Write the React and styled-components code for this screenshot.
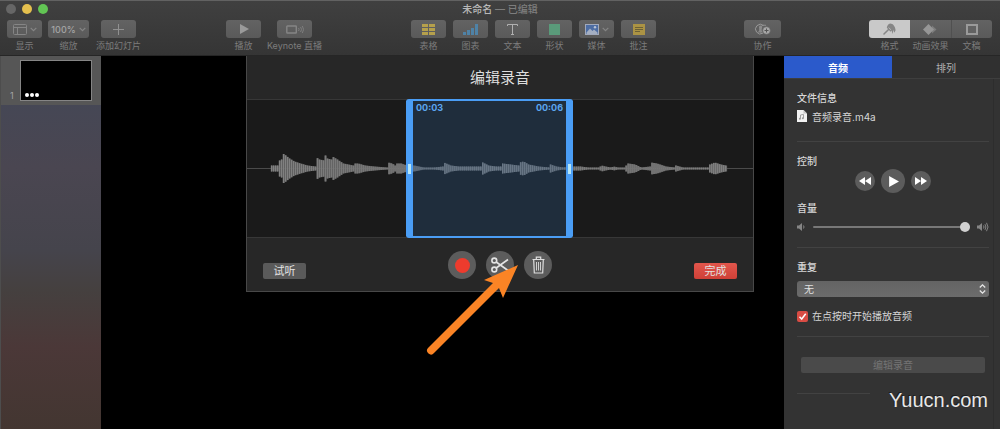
import { useState } from 'react';
import { styled, createGlobalStyle } from 'styled-components';

// [x, half height] of the recording's envelope
const ENVELOPE = [
  [0, 0], [24, 0], [25, 3], [32, 3], [33, 8], [35, 9], [36, 15], [38, 14], [43, 10], [48, 7],
  [54, 5], [61, 3], [69, 2], [70, 11], [73, 9], [78, 8], [79, 13], [81, 10], [85, 9], [86, 12],
  [91, 9], [97, 5], [107, 3], [108, 5], [112, 5], [119, 3], [128, 2], [141, 1], [142, 6],
  [146, 5], [149, 3], [150, 5], [155, 5], [161, 3], [168, 3], [178, 1], [188, 1], [197, 2],
  [198, 6], [205, 3], [213, 2], [236, 2], [237, 6], [243, 3], [250, 2], [256, 2], [257, 5],
  [265, 4], [273, 3], [274, 6], [278, 7], [283, 4], [293, 2], [304, 1], [305, 4], [311, 2],
  [318, 1], [323, 2], [335, 2], [343, 1], [354, 1], [356, 3], [360, 2], [366, 1], [368, 2],
  [373, 1], [380, 1], [381, 3], [383, 5], [390, 4], [396, 1], [405, 2], [406, 6], [412, 5],
  [421, 2], [430, 1], [431, 3], [438, 1], [463, 1], [465, 4], [470, 6], [476, 4], [481, 3],
  [482, 0], [508, 0],
];

const heightAt = (x) => {
  const i = ENVELOPE.findIndex(([px]) => px > x);
  if (i < 1) return 0;
  const [x0, h0] = ENVELOPE[i - 1];
  const [x1, h1] = ENVELOPE[i];
  return h0 + ((h1 - h0) * (x - x0)) / (x1 - x0);
};

const BARS = Array.from({ length: 253 }, (_, i) => ({ x: i * 2, h: heightAt(i * 2 + 1) }))
  .filter(({ h }) => h > 0);

const Chevron = () => (
  <svg width="7" height="5" viewBox="0 0 7 5" fill="none" stroke="#858585" strokeWidth="1.2">
    <path d="M.7 .8 3.5 3.7 6.3 .8" />
  </svg>
);

const ViewIcon = () => (
  <svg width="14" height="11" viewBox="0 0 14 11" fill="none" stroke="#858585">
    <rect x=".5" y=".5" width="13" height="10" rx="1" />
    <path d="M.5 3.5h13M4.5 3.5v7" />
  </svg>
);

const PlusIcon = () => (
  <svg width="11" height="11" viewBox="0 0 11 11" stroke="#909090">
    <path d="M5.5 0v11M0 5.5h11" />
  </svg>
);

const PlayIcon = ({ size = 10, color = '#9a9a9a' }) => (
  <svg width={size} height={size} viewBox="0 0 10 10" fill={color}>
    <path d="M1 0 10 5 1 10z" />
  </svg>
);

const LiveIcon = () => (
  <svg width="18" height="9" viewBox="0 0 18 9" fill="none" stroke="#858585">
    <rect x=".8" y="1" width="9.5" height="7" rx=".5" strokeWidth="1.4" />
    <path d="M12.5 3q1.2 1.5 0 3M14.5 2q2.2 2.5 0 5M16.3 1q2.6 3.5 0 7" strokeWidth=".8" />
  </svg>
);

const TableIcon = () => (
  <svg width="13" height="11" viewBox="0 0 13 11" fill="#b5a04c">
    <path d="M0 0h6v3H0zM7 0h6v3H7zM0 4h6v3H0zM7 4h6v3H7zM0 8h6v3H0zM7 8h6v3H7z" />
  </svg>
);

const ChartIcon = () => (
  <svg width="15" height="11" viewBox="0 0 15 11" fill="#4f82a6">
    <path d="M0 8h3v3H0zM4 6h3v5H4zM8 4h3v7H8zM12 0h3v11h-3z" />
  </svg>
);

const TextIcon = () => (
  <svg width="11" height="11" viewBox="0 0 11 11" stroke="#b0b0b0" fill="none">
    <path d="M.5 2V.5h10V2M5.5 .5V10.500M4 10.500h3" />
  </svg>
);

const ShapeIcon = () => (
  <svg width="11" height="11" viewBox="0 0 11 11"><rect width="11" height="11" fill="#5a9a7a" /></svg>
);

const MediaIcon = () => (
  <svg width="14" height="11" viewBox="0 0 14 11">
    <rect x=".5" y=".5" width="13" height="10" fill="#4d6da3" stroke="#a1a9bb" />
    <path d="M1.500 8.500 5 4.500 7.500 7 9 5.500 12.500 8.500V10h-11z" fill="#a4afc3" />
    <circle cx="10" cy="3.300" r="1.200" fill="#bac4d4" />
  </svg>
);

const CommentIcon = () => (
  <svg width="12" height="11" viewBox="0 0 12 11">
    <rect width="12" height="11" fill="#ab9344" />
    <path d="M2 3.500h8M2 5.500h8M2 7.500h5" stroke="#6b6036" />
  </svg>
);

const CollabIcon = () => (
  <svg width="17" height="12" viewBox="0 0 17 12" fill="none" stroke="#999">
    <path d="M9 10.100A4.800 4.800 0 1 1 9.500 2.500" />
    <path d="M6.500 9.500A4.800 4.800 0 0 1 12 2.300" strokeWidth=".8" />
    <path d="M6.500 2.500c1.800 0 2.200 2 1.200 3.500v1.300l1 2.200H3.600l1.900-2.200V6C4.500 4.500 4.800 2.500 6.500 2.500z" fill="#8a8a8a" stroke="none" />
    <circle cx="12.500" cy="7.500" r="3.800" fill="#a6a6a6" stroke="#666" strokeWidth=".6" />
    <path d="M12.500 5.500v4M10.500 7.500h4" stroke="#555" />
  </svg>
);

const FormatIcon = () => (
  <svg width="13" height="12" viewBox="0 0 13 12" fill="#868686">
    <path d="M3.800 4.800C4.200 2.600 5.200 .5 7.200 .4c2.800 0 5 2.800 5.400 6.800l-1.300 2.600-.9-3-.7 4.200-1.200-3.600-1.100 1.400-1.500-1.900z" />
    <path d="M5.800 6.300 1 11" stroke="#868686" strokeWidth="1.500" strokeLinecap="round" />
    <path d="M5.600 4.600 8 6.800" stroke="#c9c9c9" strokeWidth=".7" />
  </svg>
);

const AnimateIcon = () => (
  <svg width="15" height="11" viewBox="0 0 15 11">
    <path d="M9 1.500 13.500 5.500 9 9.500z" fill="#7d7d7d" />
    <path d="M0 5.500 5.500 0 11 5.500 5.500 11z" fill="#969696" />
  </svg>
);

const DocumentIcon = () => (
  <svg width="12" height="11" viewBox="0 0 12 11">
    <rect x="1" y="1" width="10" height="9" fill="#626262" stroke="#9a9a9a" strokeWidth="2" />
  </svg>
);

const ScissorsIcon = () => (
  <svg width="18" height="16" viewBox="0 0 18 16" fill="none" stroke="#e4e4e4" strokeWidth="1.600">
    <circle cx="3.300" cy="3.500" r="2.400" />
    <circle cx="3.300" cy="12.500" r="2.400" />
    <path d="M5.200 5 17 13.500M5.200 11 17 2.500" />
  </svg>
);

const TrashIcon = () => (
  <svg width="13" height="18" viewBox="0 0 13 18" fill="none" stroke="#dedede" strokeWidth="1.200">
    <path d="M.5 3.500h12M4.300 3.300V1.200h4.400v2.100M1.700 3.800 2.300 17h8.400l.6-13.200" />
    <path d="M4.500 6v8.500M6.500 6v8.500M8.500 6v8.500" strokeWidth=".9" />
  </svg>
);

const SkipIcon = ({ back }) => (
  <svg width="12" height="8" viewBox="0 0 12 8" fill="#fff">
    <path d={back ? 'M6 0v8L0 4zM12 0v8L6 4z' : 'M0 0v8l6-4zM6 0v8l6-4z'} />
  </svg>
);

const SpeakerIcon = ({ loud }) => (
  <svg width={loud ? 12 : 9} height="10" viewBox={loud ? '0 0 12 10' : '0 0 9 10'} fill="none" stroke="#858585">
    <path d="M0 3.500h2L5 1v8L2 6.500H0z" fill="#858585" stroke="none" />
    <path d="M6.500 3.500q1 1.500 0 3" />
    {loud && <path d="M8 2.200q1.800 2.800 0 5.600M9.500 .8q3 4.200 0 8.400" />}
  </svg>
);

const FileIcon = () => (
  <svg width="10" height="12" viewBox="0 0 10 12">
    <path d="M0 0h6.500L10 3.500V12H0z" fill="#f2f2f2" />
    <path d="M6.500 0v3.500H10z" fill="#c4c4c4" />
    <path d="M3.500 8.700V5l3-.6v3.700" fill="none" stroke="#9a9a9a" strokeWidth=".9" />
    <circle cx="2.900" cy="8.800" r="1" fill="#9a9a9a" />
    <circle cx="5.900" cy="8.200" r="1" fill="#9a9a9a" />
  </svg>
);

const INSERT_TOOLS = [
  { label: '表格', icon: <TableIcon /> },
  { label: '图表', icon: <ChartIcon /> },
  { label: '文本', icon: <TextIcon /> },
  { label: '形状', icon: <ShapeIcon /> },
  { label: '媒体', icon: <><MediaIcon /><Chevron /></> },
  { label: '批注', icon: <CommentIcon /> },
];

const PANELS = [
  { label: '格式', icon: <FormatIcon /> },
  { label: '动画效果', icon: <AnimateIcon /> },
  { label: '文稿', icon: <DocumentIcon /> },
];

const Tool = ({ id, label, width = 35, children }) => (
  <ToolItem $width={width}>
    <ToolButton id={id} aria-label={label}>{children}</ToolButton>
    <ToolLabel htmlFor={id}>{label}</ToolLabel>
  </ToolItem>
);

const Waveform = () => (
  <WaveArea>
    <WaveSvg viewBox="0 0 508 31" preserveAspectRatio="none">
      <rect y="15" width="508" height="1" fill="#4b4b4b" />
      {BARS.map(({ x, h }) => (
        <g key={x}>
          <rect x={x} y={15.5 - h} width="2" height={h * 2} fill="#666" />
          <rect x={x} y={15.5 - h} width="1" height={h * 2} fill="#858585" />
        </g>
      ))}
    </WaveSvg>
    <Selection>
      <Handle />
      <Times><span>00:03</span><span>00:06</span></Times>
      <Handle />
    </Selection>
  </WaveArea>
);

const RecordingSheet = () => (
  <Sheet>
    <SheetTitle>编辑录音</SheetTitle>
    <Waveform />
    <SheetFooter>
      <PushButton>试听</PushButton>
      <RoundButtons>
        <RoundButton $size={28} aria-label="录音"><RecordDot /></RoundButton>
        <RoundButton $size={28} aria-label="裁剪"><ScissorsIcon /></RoundButton>
        <RoundButton $size={28} aria-label="删除"><TrashIcon /></RoundButton>
      </RoundButtons>
      <PushButton $primary>完成</PushButton>
    </SheetFooter>
    <Pointer viewBox="0 0 98 94">
      <path d="M93 1 78 34 74 24 9 89A3.500 3.500 0 0 1 3 84L68 19 59 16z" fill="#fb8425" />
    </Pointer>
  </Sheet>
);

const Inspector = () => {
  const [tab, setTab] = useState('音频');
  const [volume, setVolume] = useState(100);
  const [autoPlay, setAutoPlay] = useState(true);

  return (
    <InspectorPane>
      <Tabs>
        {['音频', '排列'].map((name) => (
          <Tab key={name} $active={tab === name} onClick={() => setTab(name)}>{name}</Tab>
        ))}
      </Tabs>
      <InspectorBody>
        <Section>
          <Heading>文件信息</Heading>
          <FileRow><FileIcon />音频录音.m4a</FileRow>
        </Section>
        <Section>
          <Heading>控制</Heading>
          <Playback>
            <RoundButton $size={20} aria-label="后退"><SkipIcon back /></RoundButton>
            <RoundButton $size={24} aria-label="播放"><PlayIcon size={11} color="#fff" /></RoundButton>
            <RoundButton $size={20} aria-label="前进"><SkipIcon /></RoundButton>
          </Playback>
          <Heading as="label" htmlFor="volume">音量</Heading>
          <VolumeRow>
            <SpeakerIcon />
            <Slider
              id="volume"
              type="range"
              value={volume}
              onChange={({ target }) => setVolume(target.value)}
            />
            <SpeakerIcon loud />
          </VolumeRow>
        </Section>
        <Section>
          <Heading as="label" htmlFor="repeat">重复</Heading>
          <SelectBox>
            <Select id="repeat" defaultValue="none">
              <option value="none">无</option>
            </Select>
            <SelectArrows viewBox="0 0 7 10" fill="none" stroke="#e6e6e6" strokeWidth="1.300">
              <path d="M.8 3.500 3.500 .9 6.200 3.500M.8 6.500 3.500 9.100 6.200 6.500" />
            </SelectArrows>
          </SelectBox>
          <CheckRow>
            <Checkbox
              type="checkbox"
              checked={autoPlay}
              onChange={({ target }) => setAutoPlay(target.checked)}
            />
            <CheckMark viewBox="0 0 11 11" fill="none" stroke="#fff" strokeWidth="1.500">
              {autoPlay && <path d="M2.500 5.800 4.700 8 8.700 2.800" />}
            </CheckMark>
            在点按时开始播放音频
          </CheckRow>
        </Section>
        <Section>
          <EditButton disabled>编辑录音</EditButton>
        </Section>
        <ShortRule />
      </InspectorBody>
    </InspectorPane>
  );
};

const App = () => {
  const [panel, setPanel] = useState('格式');

  return (
    <Window>
      <GlobalStyle />
      <Header>
        <TitleBar>
          <Lights>
            <Light $color="#666" />
            <Light $color="#e5c04e" />
            <Light $color="#62c554" />
          </Lights>
          <Title>未命名 <Edited>— 已编辑</Edited></Title>
        </TitleBar>
        <Toolbar>
          <Group $gap={6}>
            <Tool id="view" label="显示"><ViewIcon /><Chevron /></Tool>
            <Tool id="zoom" label="缩放" width={41}>100%<Chevron /></Tool>
          </Group>
          <AddGroup><Tool id="add" label="添加幻灯片"><PlusIcon /></Tool></AddGroup>
          <Spacer $grow={90} />
          <Group $gap={16}>
            <Tool id="play" label="播放"><PlayIcon /></Tool>
            <Tool id="live" label="Keynote 直播"><LiveIcon /></Tool>
          </Group>
          <Spacer $grow={99} />
          <Group $gap={7}>
            {INSERT_TOOLS.map(({ label, icon }) => (
              <Tool key={label} id={label} label={label}>{icon}</Tool>
            ))}
          </Group>
          <Spacer $grow={88} />
          <Tool id="collab" label="协作" width={37}><CollabIcon /></Tool>
          <Spacer $grow={88} />
          <Segments>
            {PANELS.map(({ label, icon }) => (
              <ToolItem key={label} $width={41}>
                <SegmentButton
                  id={label}
                  aria-label={label}
                  $active={panel === label}
                  onClick={() => setPanel(label)}
                >
                  {icon}
                </SegmentButton>
                <ToolLabel htmlFor={label}>{label}</ToolLabel>
              </ToolItem>
            ))}
          </Segments>
        </Toolbar>
      </Header>
      <Main>
        <Navigator>
          <SlideRow>
            <SlideNumber>1</SlideNumber>
            <Thumbnail><i /><i /><i /></Thumbnail>
          </SlideRow>
        </Navigator>
        <Canvas />
        <Inspector />
        <SheetLayer><RecordingSheet /></SheetLayer>
      </Main>
      <Watermark>Yuucn.com</Watermark>
    </Window>
  );
};

const GlobalStyle = createGlobalStyle`
  * {
    box-sizing: border-box;
  }

  body {
    background: #000;
    font-family: Inter, "Noto Sans CJK SC", sans-serif;
    font-size: 10px;
    margin: 0;
  }

  button, select, input {
    border: 0;
    color: inherit;
    font: inherit;
    margin: 0;
    padding: 0;
  }

  svg {
    display: block;
    flex: none;
  }
`;

const Window = styled.div`
  display: flex;
  flex-direction: column;
  min-height: 100vh;
  position: relative;
`;

const Header = styled.header`
  background: linear-gradient(#404040, #353535);
  border-bottom: 1px solid #262626;
  border-top: 1px solid #626262;
`;

const TitleBar = styled.div`
  align-items: center;
  display: grid;
  grid-template-columns: 1fr auto 1fr;
  height: 16px;
  padding: 0 6px;
`;

const Lights = styled.div`
  display: flex;
  gap: 6px;
`;

const Light = styled.span`
  background: ${({ $color }) => $color};
  border-radius: 50%;
  height: 10px;
  width: 10px;
`;

const Title = styled.h1`
  color: #b8b8b8;
  font-size: 10px;
  font-weight: 500;
  line-height: 16px;
  margin: 0;
`;

const Edited = styled.span`
  color: #7d7d7d;
`;

const Toolbar = styled.div`
  display: flex;
  padding: 3px 8px 2px 7px;
`;

const Group = styled.div`
  display: flex;
  gap: ${({ $gap }) => $gap}px;
`;

const AddGroup = styled(Group)`
  margin-left: 12px;
`;

const Spacer = styled.div`
  flex: ${({ $grow }) => $grow} 1 0;
`;

const ToolItem = styled.div`
  align-items: center;
  display: flex;
  flex-direction: column;
  width: ${({ $width }) => $width}px;
`;

const ToolButton = styled.button`
  align-items: center;
  background: linear-gradient(#636363, #5a5a5a);
  border-radius: 3px;
  color: #a5a5a5;
  display: flex;
  font-size: 9px;
  font-weight: 500;
  gap: 3px;
  height: 18px;
  justify-content: center;
  width: 100%;
`;

const ToolLabel = styled.label`
  color: #7c7c7c;
  font-size: 9px;
  line-height: 14px;
  margin-top: 1px;
  white-space: nowrap;
`;

const Segments = styled.div`
  display: flex;
`;

const SegmentButton = styled(ToolButton)`
  background: ${({ $active }) => $active ? '#c9c9c9' : 'linear-gradient(#636363, #5a5a5a)'};
  border-radius: 0;

  ${ToolItem}:first-child & {
    border-radius: 3px 0 0 3px;
  }

  ${ToolItem}:last-child & {
    border-left: 1px solid #505050;
    border-radius: 0 3px 3px 0;
  }
`;

const Main = styled.main`
  display: flex;
  flex: 1;
  position: relative;
`;

const Navigator = styled.aside`
  background: linear-gradient(#424858, #4a4651 30%, #45444c 52%, #45403f 63%, #4b3838 78%, #433631);
  border-left: 1px solid #4d4d4d;
  width: 101px;
`;

const SlideRow = styled.div`
  align-items: flex-end;
  background: #565656;
  display: flex;
  height: 49px;
  padding: 4px 9px;
`;

const SlideNumber = styled.span`
  color: #a5a5a5;
  font-size: 9px;
  line-height: 10px;
  width: 10px;
`;

const Thumbnail = styled.div`
  align-items: flex-end;
  background: #000;
  border: 1px solid #858585;
  display: flex;
  gap: 1px;
  height: 41px;
  padding: 3px 4px;
  width: 72px;

  i {
    background: #fff;
    border-radius: 50%;
    height: 4px;
    width: 4px;
  }
`;

const Canvas = styled.div`
  background: #000;
  flex: 1;
`;

const SheetLayer = styled.div`
  display: flex;
  inset: 0;
  justify-content: center;
  pointer-events: none;
  position: absolute;
`;

const Sheet = styled.section`
  align-self: flex-start;
  background: #272727;
  border: solid #484848;
  border-width: 0 1px 1px;
  pointer-events: auto;
  position: relative;
  width: 508px;
`;

const SheetTitle = styled.h2`
  color: #dedede;
  font-size: 15px;
  font-weight: 400;
  line-height: 43px;
  margin: 0;
  text-align: center;
`;

const WaveArea = styled.div`
  align-items: center;
  background: #1a1a1a;
  border: solid #373737;
  border-width: 1px 0;
  display: flex;
  height: 139px;
  position: relative;
`;

const WaveSvg = styled.svg`
  height: 31px;
  width: 100%;
`;

const Selection = styled.div`
  background: rgba(44, 89, 140, 0.3);
  border: solid #4a9df5;
  border-width: 2px 0;
  border-radius: 3px;
  bottom: -1px;
  display: flex;
  left: 159px;
  position: absolute;
  top: -1px;
  width: 167px;
`;

const Handle = styled.span`
  align-items: center;
  background: #4a9df5;
  display: flex;
  justify-content: center;
  width: 7px;

  &::after {
    background: #b5e5f7;
    content: '';
    height: 10px;
    width: 3px;
  }
`;

const Times = styled.div`
  color: #5ba5f0;
  display: flex;
  flex: 1;
  font-size: 9px;
  font-weight: 700;
  justify-content: space-between;
  line-height: 13px;
  padding: 0 3px;
`;

const SheetFooter = styled.footer`
  display: grid;
  grid-template-columns: 1fr auto 1fr;
  padding: 13px 16px 12px;
`;

const RoundButtons = styled.div`
  display: flex;
  gap: 10px;
`;

const RoundButton = styled.button`
  align-items: center;
  background: #5c5c5c;
  border-radius: 50%;
  display: flex;
  height: ${({ $size }) => $size}px;
  justify-content: center;
  width: ${({ $size }) => $size}px;
`;

const RecordDot = styled.span`
  background: #ee3b2d;
  border-radius: 50%;
  height: 15px;
  width: 15px;
`;

const PushButton = styled.button`
  align-self: end;
  background: ${({ $primary }) => $primary ? 'linear-gradient(#e2564c, #cf4037)' : '#5a5a5a'};
  border-radius: 2px;
  color: #e2e2e2;
  font-size: 11px;
  height: 16px;
  justify-self: ${({ $primary }) => $primary ? 'end' : 'start'};
  line-height: 16px;
  width: 43px;
`;

const Pointer = styled.svg`
  height: 94px;
  left: 178px;
  pointer-events: none;
  position: absolute;
  top: 208px;
  width: 98px;
`;

const InspectorPane = styled.aside`
  background: #333;
  color: #d6d6d6;
  width: 216px;
`;

const Tabs = styled.div`
  border-bottom: 1px solid #3e3e3e;
  display: flex;
`;

const Tab = styled.button`
  background: ${({ $active }) => $active ? '#2b5acb' : '#303030'};
  color: ${({ $active }) => $active ? '#fff' : '#b0b0b0'};
  flex: 1;
  font-weight: ${({ $active }) => $active ? 700 : 400};
  height: 22px;
`;

const InspectorBody = styled.div`
  border-right: 1px solid #2d2d2d;
  margin-right: 6px;
  min-height: calc(100% - 23px);
  padding: 0 4px 0 13px;
`;

const Section = styled.section`
  border-bottom: 1px solid #424242;
  padding: 12px 0;

  &:first-child {
    padding-bottom: 17px;
  }

  &:last-of-type {
    border-bottom: 0;
    padding: 20px 4px;
  }
`;

const Heading = styled.h3`
  display: block;
  font-size: 10px;
  font-weight: 500;
  line-height: 14px;
  margin: 0;
`;

const FileRow = styled.div`
  align-items: center;
  display: flex;
  gap: 5px;
  height: 16px;
  margin-top: 3px;
`;

const Playback = styled.div`
  align-items: center;
  display: flex;
  gap: 6px;
  justify-content: center;
  margin: 1px 0 8px;
`;

const VolumeRow = styled.div`
  align-items: center;
  display: flex;
  gap: 7px;
  height: 16px;
  margin-top: 4px;
`;

const Slider = styled.input`
  appearance: none;
  background: transparent;
  flex: 1;
  height: 10px;
  min-width: 0;

  &::-webkit-slider-runnable-track {
    background: #787878;
    border-radius: 1px;
    height: 2px;
  }

  &::-webkit-slider-thumb {
    appearance: none;
    background: #d0d0d0;
    border-radius: 50%;
    height: 10px;
    margin-top: -4px;
    width: 10px;
  }
`;

const SelectBox = styled.div`
  margin: 7px 0 12px;
  position: relative;
`;

const Select = styled.select`
  appearance: none;
  background: linear-gradient(#646464, #6c6c6c);
  border-radius: 3px;
  color: #e0e0e0;
  display: block;
  height: 16px;
  padding: 0 7px;
  width: 100%;
`;

const SelectArrows = styled.svg`
  height: 10px;
  pointer-events: none;
  position: absolute;
  right: 3px;
  top: 3px;
  width: 7px;
`;

const CheckRow = styled.label`
  align-items: center;
  display: flex;
  gap: 4px;
  line-height: 14px;
  margin-bottom: 1px;
  position: relative;
`;

const Checkbox = styled.input`
  appearance: none;
  background: #666;
  border-radius: 2px;
  height: 11px;
  width: 11px;

  &:checked {
    background: #d94c44;
  }
`;

const CheckMark = styled.svg`
  height: 11px;
  left: 0;
  pointer-events: none;
  position: absolute;
  width: 11px;
`;

const EditButton = styled.button`
  background: #4a4a4a;
  border-radius: 2px;
  color: #747474;
  display: block;
  height: 16px;
  line-height: 16px;
  width: 100%;
`;

const ShortRule = styled.div`
  background: #424242;
  height: 1px;
  width: 38%;
`;

const Watermark = styled.span`
  bottom: 17px;
  color: #e8e8e8;
  font-family: "Liberation Sans", sans-serif;
  font-size: 20px;
  line-height: 24px;
  position: absolute;
  right: 12px;
  text-shadow: -1px -1px 0 #1e1e1e;
`;

export default App;
